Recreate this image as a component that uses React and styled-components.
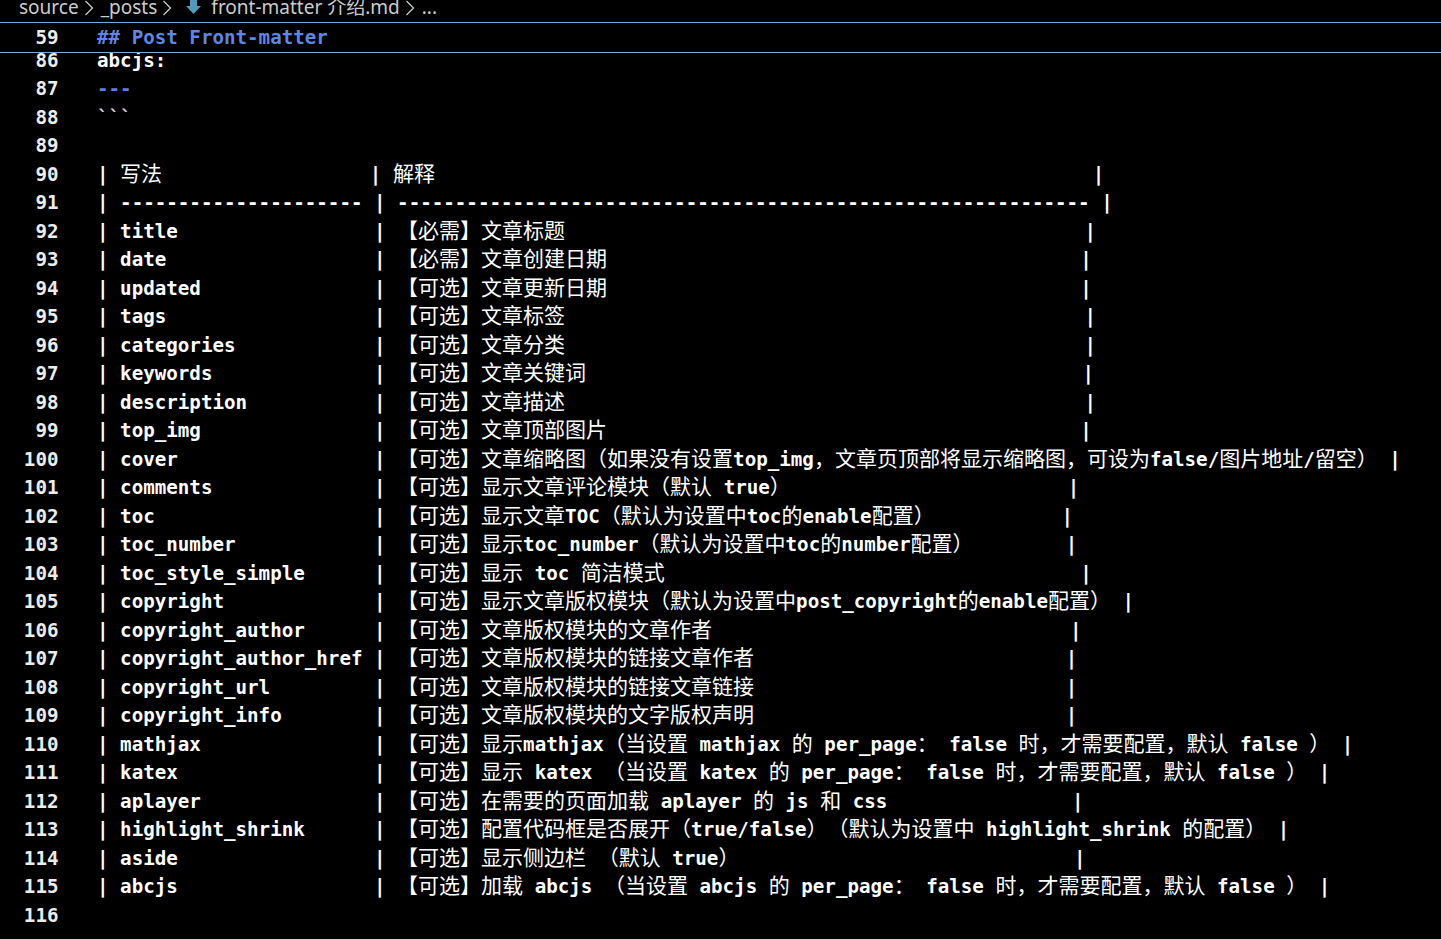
import React from 'react';
import styled, { createGlobalStyle } from 'styled-components';

const GlobalStyle = createGlobalStyle`
  html, body {
    margin: 0;
    padding: 0;
    background: #000;
  }
  #root {
    min-height: 100vh;
  }
`;

const Editor = styled.div`
  position: relative;
  width: 1441px;
  height: 939px;
  overflow: hidden;
  background: #000;
  font-family: 'DejaVu Sans Mono', monospace;
  font-size: 19.18px;
  font-weight: bold;
  color: #fff;
`;

const Breadcrumb = styled.div`
  height: 22px;
  overflow: hidden;
  padding-left: 19px;
`;

const Crumbs = styled.div`
  display: flex;
  align-items: center;
  height: 22px;
  margin-top: -4px;
  font-family: 'Noto Sans', 'Noto Sans CJK SC', sans-serif;
  font-weight: 400;
  font-size: 19px;
  color: #cccccc;
  white-space: pre;
`;

const Crumb = styled.span`
  line-height: 22px;
`;

const Chevron = styled.svg`
  flex: none;
  margin: 2px 6px 0 4px;
`;

const FileIcon = styled.svg`
  flex: none;
  margin: 0 10px 0 7px;
`;

const Sticky = styled.div`
  position: absolute;
  top: 22px;
  left: 0;
  right: 0;
  height: 29px;
  background: #000;
  border-top: 1px solid #75aed6;
  border-bottom: 1px solid #75aed6;
  z-index: 2;
`;

const Lines = styled.div`
  margin-top: 24.75px;
`;

const Row = styled.div`
  display: flex;
  height: ${(p) => p.$h || '28.5px'};
  line-height: ${(p) => p.$h || '28.5px'};
  white-space: pre;
`;

const LineNo = styled.span`
  flex: none;
  width: 58.5px;
  text-align: right;
  color: #ececec;
`;

const toneColor = {
  heading: '#5f86e3',
  rule: '#5b7fd8',
  fence: '#d4d4d4',
  text: '#ffffff',
};

const Code = styled.span`
  margin-left: 38.5px;
  color: ${(p) => toneColor[p.$tone || 'text']};
`;

const Wide = styled.span`
  font-family: 'Noto Sans CJK SC', sans-serif;
  font-weight: 400;
  font-size: 21px;
  line-height: 1;
  text-spacing-trim: space-all;
`;

const WIDE_RE = /([\u2e80-\u9fff\u3000-\u303f\uff00-\uffef]+)/;
const isWide = (ch) => /[\u2e80-\u9fff\u3000-\u303f\uff00-\uffef]/.test(ch);
const cols = (s) => [...s].reduce((n, ch) => n + (isWide(ch) ? 2 : 1), 0);
const pad = (s, w) => s + ' '.repeat(Math.max(0, w - cols(s)));

const renderText = (s) =>
  s.split(WIDE_RE).map((part, i) =>
    i % 2 === 1 ? <Wide key={i}>{part}</Wide> : part
  );

const options = [
  ['title', '【必需】文章标题'],
  ['date', '【必需】文章创建日期'],
  ['updated', '【可选】文章更新日期'],
  ['tags', '【可选】文章标签'],
  ['categories', '【可选】文章分类'],
  ['keywords', '【可选】文章关键词'],
  ['description', '【可选】文章描述'],
  ['top_img', '【可选】文章顶部图片'],
  ['cover', '【可选】文章缩略图（如果没有设置top_img，文章页顶部将显示缩略图，可设为false/图片地址/留空）'],
  ['comments', '【可选】显示文章评论模块（默认 true）'],
  ['toc', '【可选】显示文章TOC（默认为设置中toc的enable配置）'],
  ['toc_number', '【可选】显示toc_number（默认为设置中toc的number配置）'],
  ['toc_style_simple', '【可选】显示 toc 简洁模式'],
  ['copyright', '【可选】显示文章版权模块（默认为设置中post_copyright的enable配置）'],
  ['copyright_author', '【可选】文章版权模块的文章作者'],
  ['copyright_author_href', '【可选】文章版权模块的链接文章作者'],
  ['copyright_url', '【可选】文章版权模块的链接文章链接'],
  ['copyright_info', '【可选】文章版权模块的文字版权声明'],
  ['mathjax', '【可选】显示mathjax（当设置 mathjax 的 per_page： false 时，才需要配置，默认 false ）'],
  ['katex', '【可选】显示 katex （当设置 katex 的 per_page： false 时，才需要配置，默认 false ）'],
  ['aplayer', '【可选】在需要的页面加载 aplayer 的 js 和 css'],
  ['highlight_shrink', '【可选】配置代码框是否展开（true/false）（默认为设置中 highlight_shrink 的配置）'],
  ['aside', '【可选】显示侧边栏 （默认 true）'],
  ['abcjs', '【可选】加载 abcjs （当设置 abcjs 的 per_page： false 时，才需要配置，默认 false ）'],
];

const tableRow = (a, b) => `| ${pad(a, 21)} | ${pad(b, 60)} |`;

const lines = [
  { n: 86, text: 'abcjs:' },
  { n: 87, text: '---', tone: 'rule' },
  { n: 88, text: '```', tone: 'fence' },
  { n: 89, text: '' },
  { n: 90, text: tableRow('写法', '解释') },
  { n: 91, text: `| ${'-'.repeat(21)} | ${'-'.repeat(60)} |` },
  ...options.map(([k, v], i) => ({ n: 92 + i, text: tableRow(k, v) })),
  { n: 116, text: '' },
];

const ChevronIcon = () => (
  <Chevron width="12" height="18" viewBox="0 0 12 18">
    <path d="M2.5 2 L9.5 9 L2.5 16" fill="none" stroke="#cccccc" strokeWidth="1.3" />
  </Chevron>
);

const MarkdownIcon = () => (
  <FileIcon width="15" height="22" viewBox="0 0 15 22">
    <path d="M4 0 H11 V10 H15 L7.5 18 L0 10 H4 Z" fill="#519aba" />
  </FileIcon>
);

const App = () => {
  return (
    <>
      <GlobalStyle />
      <Editor>
        <Breadcrumb>
          <Crumbs>
            <Crumb>source</Crumb>
            <ChevronIcon />
            <Crumb>_posts</Crumb>
            <ChevronIcon />
            <MarkdownIcon />
            <Crumb>front-matter 介绍.md</Crumb>
            <ChevronIcon />
            <Crumb>...</Crumb>
          </Crumbs>
        </Breadcrumb>
        <Sticky>
          <Row $h="29px">
            <LineNo>59</LineNo>
            <Code $tone="heading">## Post Front-matter</Code>
          </Row>
        </Sticky>
        <Lines>
          {lines.map((l) => (
            <Row key={l.n}>
              <LineNo>{l.n}</LineNo>
              <Code $tone={l.tone}>{renderText(l.text)}</Code>
            </Row>
          ))}
        </Lines>
      </Editor>
    </>
  );
};

export default App;
